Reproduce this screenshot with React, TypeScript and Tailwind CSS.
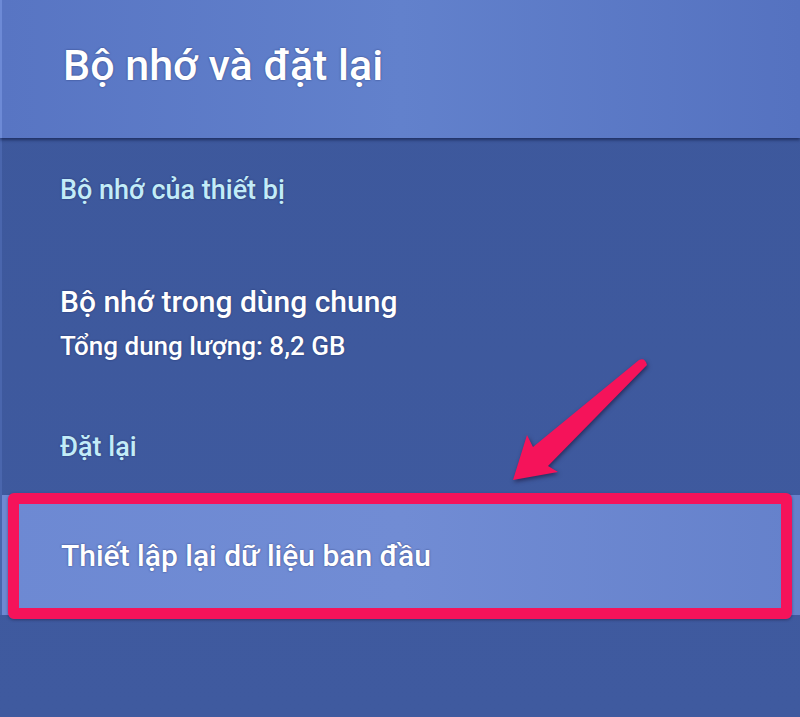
import React from 'react'

const FONT = { fontFamily: 'Roboto, "Noto Sans", "Liberation Sans", sans-serif' }

function Arrow() {
  return (
    <svg
      className="absolute left-0 top-0 pointer-events-none"
      width={800}
      height={717}
      viewBox="0 0 800 717"
      style={{ filter: 'drop-shadow(1px 2px 2px rgba(20,10,40,0.55))' }}
    >
      <path
        d="M513 480 L527 435 L533 447 L639 360 Q645 357 647 365 L548 466 L558 472 Z"
        fill="#f5135a"
        strokeLinejoin="round"
      />
    </svg>
  )
}

export default function App() {
  return (
    <div
      className="relative w-[800px] h-[717px] overflow-hidden bg-gradient-to-b from-[#3d589c] to-[#3f5a9f] text-white [text-shadow:0_0_2px_rgba(25,35,90,0.7)]"
      style={FONT}
    >
      {/* page header */}
      <header className="relative z-10 h-[138px] pl-[61px] pt-[44px] bg-gradient-to-r from-[#5875c3] via-[#6281cc] to-[#5572c0] border-l-2 border-[#6d8ad6] shadow-[0_2px_3px_rgba(10,20,60,0.6)]">
        <h1 className="text-[43px] leading-none font-medium">Bộ nhớ và đặt lại</h1>
      </header>

      <div className="border-l-2 border-[#4a66ad]">
        <section className="pl-[58px] pt-[39px]">
          <h2 className="text-[27px] leading-none font-medium text-[#c2ecf8]">Bộ nhớ của thiết bị</h2>
          <div className="mt-[83px]">
            <div className="text-[30px] leading-none font-medium">Bộ nhớ trong dùng chung</div>
            <div className="mt-[16px] text-[26px] leading-none font-medium">Tổng dung lượng: 8,2 GB</div>
          </div>
          <h2 className="mt-[75px] text-[27px] leading-none font-medium text-[#c2ecf8]">Đặt lại</h2>
        </section>

        {/* selected row */}
        <div className="relative mt-[34px] h-[120px] pl-[59px] pt-[46px] bg-gradient-to-r from-[#6d89d3] via-[#718cd4] to-[#6581cb]">
          <div className="text-[30px] leading-none font-medium">Thiết lập lại dữ liệu ban đầu</div>
          <div className="absolute left-[6px] right-[8px] top-[-2px] bottom-[-4px] border-[11px] border-[#f5135a] rounded-[6px] shadow-[0_1px_3px_rgba(20,10,40,0.4)]" />
        </div>
      </div>

      <Arrow />
    </div>
  )
}
